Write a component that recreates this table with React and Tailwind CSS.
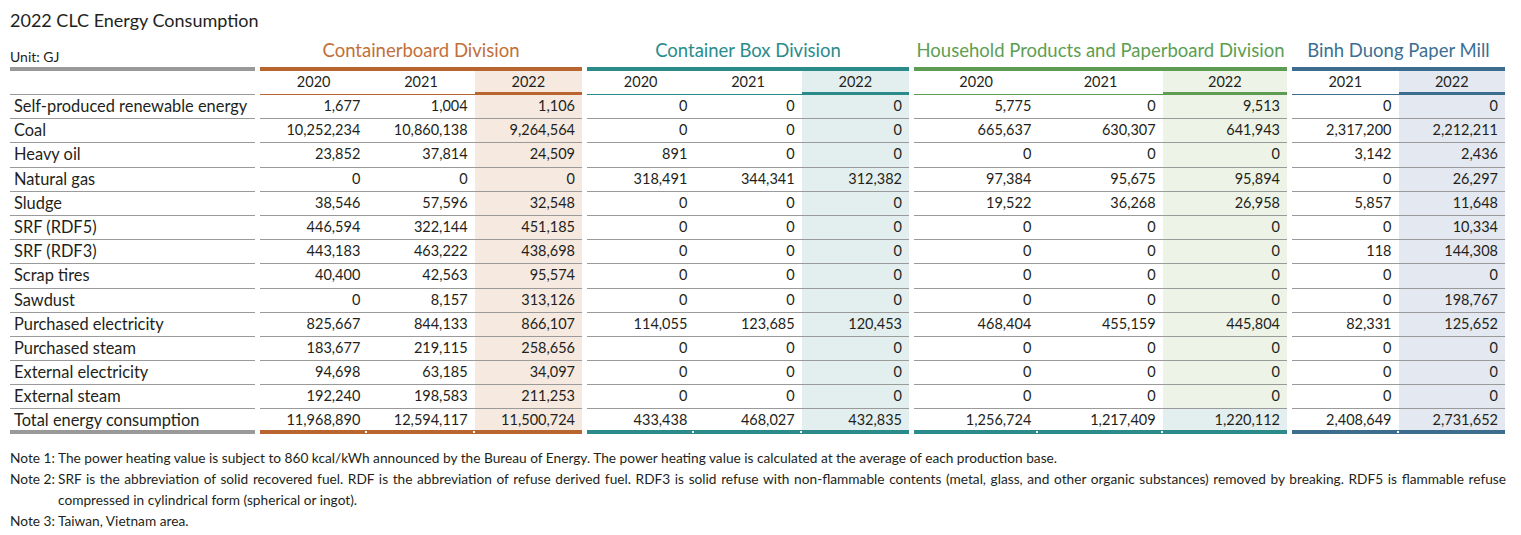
import React from "react";

const divisions = [
  { name: "Containerboard Division", w: "w-[322px]", years: ["2020", "2021", "2022"], title: "text-[#c2703a]", line: "bg-[#b8652f]", border: "border-[#b8652f]", shade: "bg-[#f6e9df]" },
  { name: "Container Box Division", w: "w-[322px]", years: ["2020", "2021", "2022"], title: "text-[#2b8c8c]", line: "bg-[#2b8b8b]", border: "border-[#2b8b8b]", shade: "bg-[#e3efef]" },
  { name: "Household Products and Paperboard Division", w: "w-[373px]", years: ["2020", "2021", "2022"], title: "text-[#5c9e52]", line: "bg-[#5d9c52]", border: "border-[#5d9c52]", shade: "bg-[#edf3e6]" },
  { name: "Binh Duong Paper Mill", w: "w-[213px]", years: ["2021", "2022"], title: "text-[#3b6f94]", line: "bg-[#3d6d8e]", border: "border-[#3d6d8e]", shade: "bg-[#e4e8f0]" },
];

const rows = [
  ["Self-produced renewable energy", ["1,677", "1,004", "1,106"], ["0", "0", "0"], ["5,775", "0", "9,513"], ["0", "0"]],
  ["Coal", ["10,252,234", "10,860,138", "9,264,564"], ["0", "0", "0"], ["665,637", "630,307", "641,943"], ["2,317,200", "2,212,211"]],
  ["Heavy oil", ["23,852", "37,814", "24,509"], ["891", "0", "0"], ["0", "0", "0"], ["3,142", "2,436"]],
  ["Natural gas", ["0", "0", "0"], ["318,491", "344,341", "312,382"], ["97,384", "95,675", "95,894"], ["0", "26,297"]],
  ["Sludge", ["38,546", "57,596", "32,548"], ["0", "0", "0"], ["19,522", "36,268", "26,958"], ["5,857", "11,648"]],
  ["SRF (RDF5)", ["446,594", "322,144", "451,185"], ["0", "0", "0"], ["0", "0", "0"], ["0", "10,334"]],
  ["SRF (RDF3)", ["443,183", "463,222", "438,698"], ["0", "0", "0"], ["0", "0", "0"], ["118", "144,308"]],
  ["Scrap tires", ["40,400", "42,563", "95,574"], ["0", "0", "0"], ["0", "0", "0"], ["0", "0"]],
  ["Sawdust", ["0", "8,157", "313,126"], ["0", "0", "0"], ["0", "0", "0"], ["0", "198,767"]],
  ["Purchased electricity", ["825,667", "844,133", "866,107"], ["114,055", "123,685", "120,453"], ["468,404", "455,159", "445,804"], ["82,331", "125,652"]],
  ["Purchased steam", ["183,677", "219,115", "258,656"], ["0", "0", "0"], ["0", "0", "0"], ["0", "0"]],
  ["External electricity", ["94,698", "63,185", "34,097"], ["0", "0", "0"], ["0", "0", "0"], ["0", "0"]],
  ["External steam", ["192,240", "198,583", "211,253"], ["0", "0", "0"], ["0", "0", "0"], ["0", "0"]],
  ["Total energy consumption", ["11,968,890", "12,594,117", "11,500,724"], ["433,438", "468,027", "432,835"], ["1,256,724", "1,217,409", "1,220,112"], ["2,408,649", "2,731,652"]],
];

export default function App() {
  const font = { fontFamily: "Lato, 'Open Sans', sans-serif" };
  return (
    <div className="w-[1521px] h-[535px] bg-white text-[#231f20] pl-[10px] pt-[8px]" style={font}>
      <div className="text-[18px] leading-[24px]">2022 CLC Energy Consumption</div>

      {/* Division titles */}
      <div className="flex gap-[5px] mt-[7px]">
        <div className="w-[245px] flex items-end">
          <span className="text-[14px] leading-[16px] -mb-[4px]">Unit: GJ</span>
        </div>
        {divisions.map((d) => (
          <div key={d.name} className={`${d.w} text-center text-[18.5px] leading-[22px] whitespace-nowrap ${d.title}`}>
            {d.name}
          </div>
        ))}
      </div>

      {/* Top thick lines */}
      <div className="flex gap-[5px] mt-[6px]">
        <div className="w-[245px] h-[4px] bg-[#999999]" />
        {divisions.map((d) => (
          <div key={d.name} className={`${d.w} h-[4px] ${d.line}`} />
        ))}
      </div>

      {/* Year header */}
      <div className="flex gap-[5px]">
        <div className="w-[245px] h-[24px] border-b border-[#9a9a9a]" />
        {divisions.map((d) => (
          <div key={d.name} className={`${d.w} flex`}>
            {d.years.map((y, i) => {
              const last = i === d.years.length - 1;
              return (
                <div
                  key={y}
                  className={`flex-1 h-[24px] text-center text-[14.5px] leading-[21px] ${last ? `${d.shade} border-b-[3px] ${d.border}` : `border-b ${d.border}`}`}
                >
                  {y}
                </div>
              );
            })}
          </div>
        ))}
      </div>

      {/* Data rows */}
      {rows.map((r, ri) => {
        const total = ri === rows.length - 1;
        return (
          <div key={r[0]} className="flex gap-[5px]">
            <div
              className={`w-[245px] pl-[4px] text-[16.4px] leading-[21px] whitespace-nowrap ${total ? "h-[24.4px] border-b-[4px] border-[#999999]" : "h-[24.2px] border-b border-[#9a9a9a]"}`}
            >
              {r[0]}
            </div>
            {divisions.map((d, di) => {
              const vals = r[di + 1];
              const totalBorder = di === 2 ? "border-[#2b8b8b]" : d.border;
              return (
                <div key={d.name} className={`${d.w} flex`}>
                  {vals.map((v, i) => {
                    const last = i === vals.length - 1;
                    let bg = last ? d.shade : "";
                    if (total && last && di === 2) bg = "bg-[#e3efef]";
                    return (
                      <div
                        key={i}
                        className={`relative flex-1 text-right pr-[7px] text-[14.5px] leading-[21px] ${bg} ${total ? `h-[24.4px] border-b-[4px] ${totalBorder}` : "h-[24.2px] border-b border-[#9a9a9a]"}`}
                      >
                        {v}
                        {total && !last && (
                          <span className="absolute right-0 -bottom-[3px] w-[2px] h-[2px] bg-white" />
                        )}
                      </div>
                    );
                  })}
                </div>
              );
            })}
          </div>
        );
      })}

      {/* Notes */}
      <div className="mt-[13px] w-[1496px] text-[13.7px] leading-[21px]">
        <div className="flex">
          <span className="shrink-0 w-[48px] whitespace-nowrap">Note 1:</span>
          <span>
            The power heating value is subject to 860 kcal/kWh announced by the Bureau of Energy. The power heating value is calculated at the average of each production base.
          </span>
        </div>
        <div className="flex">
          <span className="shrink-0 w-[48px] whitespace-nowrap">Note 2:</span>
          <span className="text-justify">
            SRF is the abbreviation of solid recovered fuel. RDF is the abbreviation of refuse derived fuel. RDF3 is solid refuse with non-flammable contents (metal, glass, and other organic substances) removed by breaking. RDF5 is flammable refuse compressed in cylindrical form (spherical or ingot).
          </span>
        </div>
        <div className="flex">
          <span className="shrink-0 w-[48px] whitespace-nowrap">Note 3:</span>
          <span>Taiwan, Vietnam area.</span>
        </div>
      </div>
    </div>
  );
}
